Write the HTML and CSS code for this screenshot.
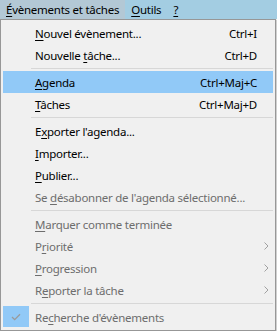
FILE: index.html
```html
<!DOCTYPE html>
<html lang="fr">
<head>
<meta charset="utf-8">
<link rel="stylesheet" href="styles.css">
</head>
<body>
<div class="menubar">
  <div class="mb-item open"><u>É</u>vènements et tâches</div>
  <div class="mb-item"><u>O</u>utils</div>
  <div class="mb-item"><u>?</u></div>
</div>
<div class="stage">
  <div class="menu">
    <div class="row"><span class="gut"></span><span class="label"><u>N</u>ouvel évènement...</span><span class="key">Ctrl+I</span><span class="arr"></span></div>
    <div class="row"><span class="gut"></span><span class="label">Nouvelle <u>t</u>âche...</span><span class="key">Ctrl+D</span><span class="arr"></span></div>
    <div class="sep"></div>
    <div class="row hl"><span class="gut"></span><span class="label"><u>A</u>genda</span><span class="key">Ctrl+Maj+C</span><span class="arr"></span></div>
    <div class="row"><span class="gut"></span><span class="label"><u>T</u>âches</span><span class="key">Ctrl+Maj+D</span><span class="arr"></span></div>
    <div class="sep"></div>
    <div class="row"><span class="gut"></span><span class="label">E<u>x</u>porter l'agenda...</span><span class="key"></span><span class="arr"></span></div>
    <div class="row"><span class="gut"></span><span class="label"><u>I</u>mporter...</span><span class="key"></span><span class="arr"></span></div>
    <div class="row"><span class="gut"></span><span class="label"><u>P</u>ublier...</span><span class="key"></span><span class="arr"></span></div>
    <div class="row dis"><span class="gut"></span><span class="label">Se <u>d</u>ésabonner de l'agenda sélectionné...</span><span class="key"></span><span class="arr"></span></div>
    <div class="sep"></div>
    <div class="row dis"><span class="gut"></span><span class="label"><u>M</u>arquer comme terminée</span><span class="key"></span><span class="arr"></span></div>
    <div class="row dis"><span class="gut"></span><span class="label">P<u>r</u>iorité</span><span class="key"></span><span class="arr"><svg width="5" height="8" viewBox="0 0 5 8"><path d="M0.5 0.5 L4 4 L0.5 7.5" fill="none" stroke="#a0a0a0" stroke-width="1"/></svg></span></div>
    <div class="row dis"><span class="gut"></span><span class="label"><u>P</u>rogression</span><span class="key"></span><span class="arr"><svg width="5" height="8" viewBox="0 0 5 8"><path d="M0.5 0.5 L4 4 L0.5 7.5" fill="none" stroke="#a0a0a0" stroke-width="1"/></svg></span></div>
    <div class="row dis"><span class="gut"></span><span class="label">R<u>e</u>porter la tâche</span><span class="key"></span><span class="arr"><svg width="5" height="8" viewBox="0 0 5 8"><path d="M0.5 0.5 L4 4 L0.5 7.5" fill="none" stroke="#a0a0a0" stroke-width="1"/></svg></span></div>
    <div class="sep"></div>
    <div class="row dis"><span class="gut"><span class="check"><svg width="10" height="8" viewBox="0 0 10 8"><path d="M1 4 L3.7 6.7 L9 1.3" fill="none" stroke="#9a9a9a" stroke-width="1.3"/></svg></span></span><span class="label">Re<u>c</u>herche d'évènements</span><span class="key"></span><span class="arr"></span></div>
  </div>
</div>
</body>
</html>
```
FILE: styles.css
```css
html, body {
  margin: 0;
  padding: 0;
}
body {
  width: 277px;
  height: 331px;
  overflow: hidden;
  background: #f0f0f0;
  font-family: "Noto Sans", "Open Sans", sans-serif;
  font-size: 11.5px;
  letter-spacing: -0.25px;
  color: #000;
}
u {
  text-decoration: underline;
  text-underline-offset: 2px;
  text-decoration-thickness: 1px;
}
.menubar {
  height: 19px;
  background: #a3cde2;
  display: flex;
  align-items: stretch;
}
.mb-item {
  padding: 0 6px;
  line-height: 19px;
}
.mb-item.open {
  background: #b3c8d5;
}
.stage {
  display: flex;
}
.menu {
  width: 270px;
  border: 1px solid #979797;
  padding: 2px;
  background: #f0f0f0;
  box-shadow: 1px 1px 0 #d0d0d0;
}
.row {
  height: 22px;
  display: grid;
  grid-template-columns: 28px 1fr auto 16px;
  align-items: center;
}
.row.hl {
  background: #91c9f7;
}
.row.dis {
  color: #6d6d6d;
}
.label {
  padding-left: 4px;
  white-space: nowrap;
}
.key {
  white-space: nowrap;
}
.arr {
  display: flex;
  justify-content: center;
  padding-left: 2px;
}
.gut {
  height: 100%;
  display: flex;
}
.check {
  width: 26px;
  height: 21px;
  background: #91c9f7;
  display: flex;
  align-items: center;
  justify-content: center;
}
.sep {
  height: 5px;
  display: flex;
  align-items: center;
  padding-left: 28px;
}
.sep::after {
  content: "";
  flex: 1;
  height: 1px;
  background: #d7d7d7;
}
```
